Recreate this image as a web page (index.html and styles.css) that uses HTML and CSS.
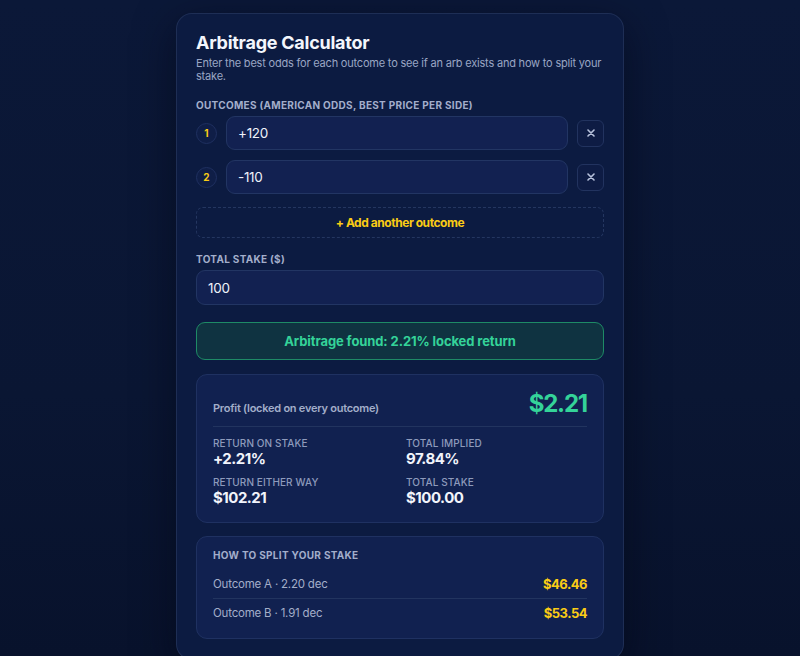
FILE: index.html
```html
<!DOCTYPE html>
<html lang="en">
<head>
<meta charset="utf-8">
<title>Arbitrage Calculator</title>
<link rel="stylesheet" href="styles.css">
</head>
<body>
<main class="card">
  <h1 class="title">Arbitrage Calculator</h1>
  <p class="subtitle">Enter the best odds for each outcome to see if an arb exists and how to split your stake.</p>

  <div class="label label-outcomes">Outcomes (American odds, best price per side)</div>
  <div class="rows">
    <div class="row">
      <span class="badge">1</span>
      <div class="input">+120</div>
      <button class="remove" aria-label="Remove">
        <svg width="8" height="8" viewBox="0 0 8 8"><path d="M1 1L7 7M7 1L1 7" stroke="#b8c2dc" stroke-width="1.6" stroke-linecap="round"/></svg>
      </button>
    </div>
    <div class="row">
      <span class="badge">2</span>
      <div class="input">-110</div>
      <button class="remove" aria-label="Remove">
        <svg width="8" height="8" viewBox="0 0 8 8"><path d="M1 1L7 7M7 1L1 7" stroke="#b8c2dc" stroke-width="1.6" stroke-linecap="round"/></svg>
      </button>
    </div>
  </div>
  <button class="add">+ Add another outcome</button>

  <div class="label label-stake">Total stake ($)</div>
  <div class="input stake">100</div>

  <div class="banner">Arbitrage found: 2.21% locked return</div>

  <section class="panel results">
    <div class="profit">
      <span class="profit-label">Profit (locked on every outcome)</span>
      <span class="profit-value">$2.21</span>
    </div>
    <div class="stats">
      <div class="stat">
        <div class="stat-label">Return on stake</div>
        <div class="stat-value">+2.21%</div>
      </div>
      <div class="stat">
        <div class="stat-label">Total implied</div>
        <div class="stat-value">97.84%</div>
      </div>
      <div class="stat">
        <div class="stat-label">Return either way</div>
        <div class="stat-value">$102.21</div>
      </div>
      <div class="stat">
        <div class="stat-label">Total stake</div>
        <div class="stat-value">$100.00</div>
      </div>
    </div>
  </section>

  <section class="panel split">
    <div class="label split-label">How to split your stake</div>
    <div class="split-row">
      <span class="split-name">Outcome A · 2.20 dec</span>
      <span class="split-amt">$46.46</span>
    </div>
    <div class="split-row">
      <span class="split-name">Outcome B · 1.91 dec</span>
      <span class="split-amt">$53.54</span>
    </div>
  </section>
</main>
</body>
</html>
```

FILE: styles.css
```css
* { box-sizing: border-box; }

html, body {
  margin: 0;
  height: 100%;
}

body {
  font-family: Inter, "Noto Sans", sans-serif;
  background: linear-gradient(180deg, #0b1838 0%, #0a1633 60%, #08122c 100%);
  color: #e8edf7;
  overflow: hidden;
  padding-top: 13px;
}

.card {
  width: 448px;
  margin: 0 auto;
  padding: 19px 19px 20px;
  background: #0c1b41;
  border: 1px solid rgba(140, 160, 210, 0.14);
  border-radius: 16px;
  box-shadow: 0 12px 40px rgba(2, 6, 20, 0.55);
}

.title {
  margin: 0;
  font-size: 18px;
  line-height: 20px;
  font-weight: 700;
  color: #f3f6fc;
  letter-spacing: -0.25px;
}

.subtitle {
  margin: 4px 0 0;
  font-size: 11px;
  line-height: 13px;
  color: #9aa6c4;
  letter-spacing: -0.2px;
}

.label {
  font-size: 10px;
  line-height: 12px;
  font-weight: 700;
  text-transform: uppercase;
  letter-spacing: 0.3px;
  color: #a3aecb;
}

.label-outcomes { margin-top: 16px; }

.rows {
  margin-top: 5px;
  display: flex;
  flex-direction: column;
  gap: 10px;
}

.row {
  display: flex;
  align-items: center;
  gap: 9px;
}

.badge {
  flex: none;
  width: 21px;
  height: 21px;
  border-radius: 50%;
  background: #0f1e47;
  border: 1px solid #1f3060;
  color: #facc15;
  font-size: 10px;
  font-weight: 700;
  display: flex;
  align-items: center;
  justify-content: center;
}

.input {
  height: 35px;
  display: flex;
  align-items: center;
  padding: 0 11px;
  background: #122151;
  border: 1px solid #223563;
  border-radius: 9px;
  font-size: 13.5px;
  letter-spacing: -0.3px;
  color: #eef2fa;
}

.row .input { flex: 1; height: 34px; }

.remove {
  flex: none;
  width: 27px;
  height: 27px;
  border-radius: 6px;
  background: #0e1c44;
  border: 1px solid #22335f;
  display: flex;
  align-items: center;
  justify-content: center;
  padding: 0;
}

.add {
  display: block;
  width: 100%;
  margin-top: 13px;
  height: 31px;
  background: transparent;
  border: 1px dashed #243660;
  border-radius: 7px;
  color: #facc15;
  font-family: inherit;
  font-size: 12px;
  font-weight: 700;
  letter-spacing: -0.45px;
  padding: 0;
}

.label-stake { margin-top: 15px; }

.stake { margin-top: 5px; }

.banner {
  margin-top: 17px;
  height: 38px;
  display: flex;
  align-items: center;
  justify-content: center;
  background: #0f3341;
  border: 1px solid #1e8b66;
  border-radius: 9px;
  color: #34d399;
  font-size: 13px;
  font-weight: 700;
  letter-spacing: -0.1px;
}

.panel {
  background: #112150;
  border: 1px solid #1f3161;
  border-radius: 11px;
}

.results {
  margin-top: 14px;
  padding: 15px 16px 15px;
}

.profit {
  display: flex;
  justify-content: space-between;
  align-items: baseline;
  padding-bottom: 8px;
  border-bottom: 1px solid #22345f;
}

.profit-label {
  font-size: 11px;
  font-weight: 600;
  color: #a3aec9;
  letter-spacing: -0.25px;
}

.profit-value {
  font-size: 24px;
  line-height: 28px;
  font-weight: 700;
  color: #34d399;
  letter-spacing: -1.2px;
}

.stats {
  margin-top: 10px;
  display: grid;
  grid-template-columns: 1fr 1fr;
  column-gap: 12px;
  row-gap: 8px;
}

.stat-label {
  font-size: 10px;
  line-height: 12px;
  font-weight: 500;
  text-transform: uppercase;
  letter-spacing: 0.1px;
  color: #8e9bbc;
}

.stat-value {
  margin-top: 1px;
  font-size: 15px;
  line-height: 18px;
  font-weight: 700;
  color: #f1f4fb;
  letter-spacing: -0.5px;
}

.split {
  margin-top: 13px;
  padding: 12px 16px 11px;
}

.split-label { margin-bottom: 9px; }

.split-row {
  display: flex;
  justify-content: space-between;
  align-items: center;
  padding: 6px 0;
  line-height: 16px;
}

.split-row + .split-row { border-top: 1px solid #22345f; }

.split-name {
  font-size: 11.5px;
  color: #a3aec9;
  letter-spacing: -0.2px;
}

.split-amt {
  font-size: 13px;
  font-weight: 700;
  color: #facc15;
  letter-spacing: -0.5px;
}
```
